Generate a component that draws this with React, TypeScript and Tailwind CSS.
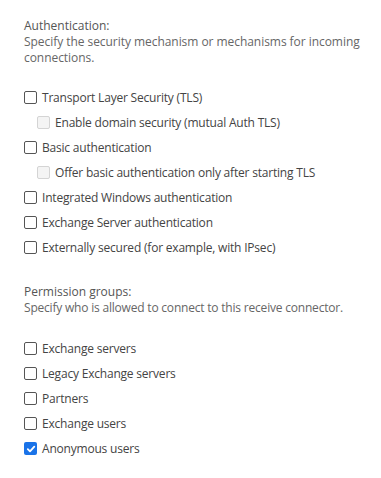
import React from 'react';

type Item = { label: string; indent?: boolean; disabled?: boolean; checked?: boolean };

const auth: Item[] = [
  { label: 'Transport Layer Security (TLS)' },
  { label: 'Enable domain security (mutual Auth TLS)', indent: true, disabled: true },
  { label: 'Basic authentication' },
  { label: 'Offer basic authentication only after starting TLS', indent: true, disabled: true },
  { label: 'Integrated Windows authentication' },
  { label: 'Exchange Server authentication' },
  { label: 'Externally secured (for example, with IPsec)' },
];

const groups: Item[] = [
  { label: 'Exchange servers' },
  { label: 'Legacy Exchange servers' },
  { label: 'Partners' },
  { label: 'Exchange users' },
  { label: 'Anonymous users', checked: true },
];

const Box: React.FC<{ checked?: boolean; disabled?: boolean }> = ({ checked, disabled }) => {
  if (checked) {
    return (
      <span className="w-[13px] h-[13px] rounded-[2px] bg-[#1a73e8] flex items-center justify-center shrink-0">
        <svg width="10" height="10" viewBox="0 0 10 10">
          <path d="M1.8 5.2 L4 7.4 L8.3 2.6" fill="none" stroke="white" strokeWidth="1.8" strokeLinecap="round" strokeLinejoin="round" />
        </svg>
      </span>
    );
  }
  return (
    <span
      className={
        disabled
          ? 'w-[13px] h-[13px] rounded-[2px] border border-[#d4d4d4] bg-[#f4f4f4] shrink-0'
          : 'w-[13px] h-[13px] rounded-[2px] border border-[#555] bg-white shrink-0'
      }
    />
  );
};

const Row: React.FC<{ item: Item }> = ({ item }) => (
  <div className={`h-[25px] flex items-center gap-[5px] ${item.indent ? 'pl-[13px]' : ''}`}>
    <Box checked={item.checked} disabled={item.disabled} />
    <span className="text-[#444] tracking-[-0.2px]">{item.label}</span>
  </div>
);

export default function App() {
  return (
    <div
      className="min-h-screen bg-white pl-6 pr-4 pt-[18px] text-[12px] leading-[16px]"
      style={{ fontFamily: '"Open Sans", "Noto Sans", sans-serif' }}
    >
      <div className="text-[#555]">Authentication:</div>
      <div className="text-[#666] tracking-[-0.05px]">Specify the security mechanism or mechanisms for incoming connections.</div>
      <div className="mt-[19px]">
        {auth.map((it) => (
          <Row key={it.label} item={it} />
        ))}
      </div>
      <div className="mt-[24px] text-[#555]">Permission groups:</div>
      <div className="text-[#666] tracking-[-0.2px]">Specify who is allowed to connect to this receive connector.</div>
      <div className="mt-[20px]">
        {groups.map((it) => (
          <Row key={it.label} item={it} />
        ))}
      </div>
    </div>
  );
}
